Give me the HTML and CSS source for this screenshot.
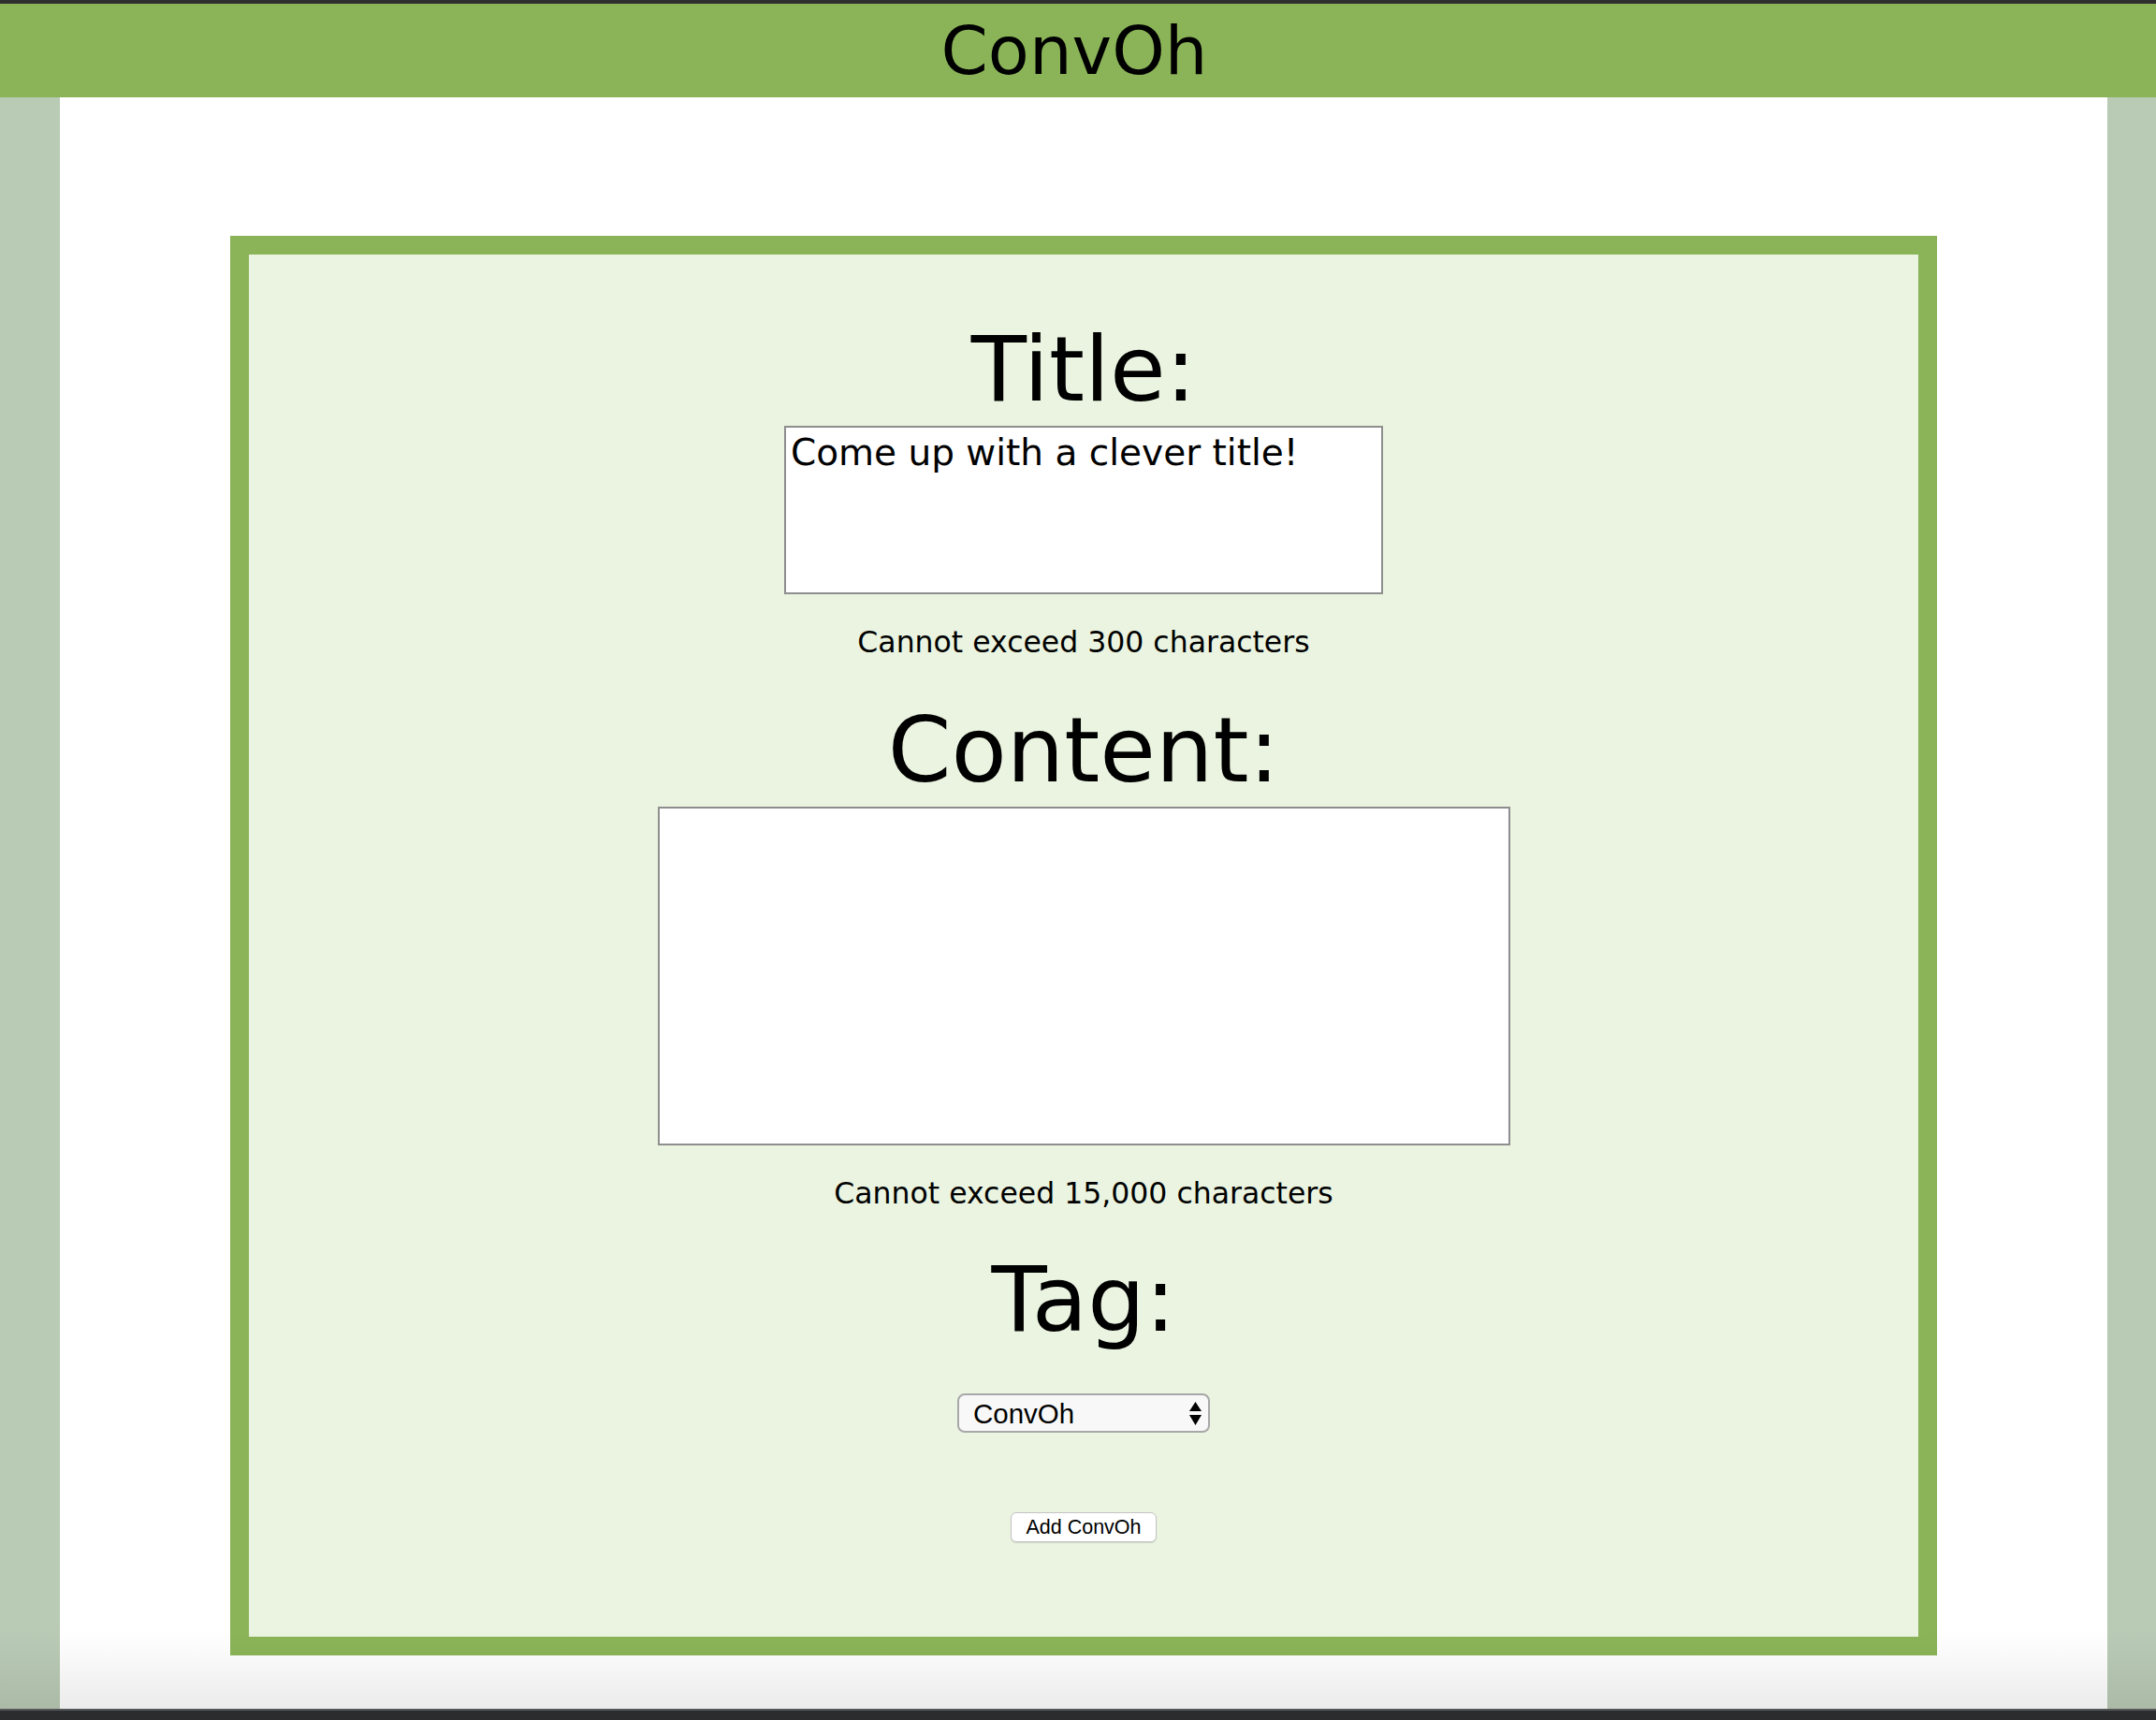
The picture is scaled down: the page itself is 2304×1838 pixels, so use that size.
FILE: index.html
```html
<!DOCTYPE html>
<html lang="en">
<head>
<meta charset="utf-8">
<title>ConvOh</title>
<link rel="stylesheet" href="styles.css">
</head>
<body>
<div class="window">
  <div class="topline"></div>
  <header class="site-header">ConvOh</header>
  <div class="main">
    <div class="side side-left"></div>
    <main class="content">
      <form class="post-form">
        <h2 class="label label-first">Title:</h2>
        <textarea class="field field-title">Come up with a clever title!</textarea>
        <p class="hint">Cannot exceed 300 characters</p>
        <h2 class="label">Content:</h2>
        <textarea class="field field-content"></textarea>
        <p class="hint">Cannot exceed 15,000 characters</p>
        <h2 class="label label-tag">Tag:</h2>
        <div class="select-wrap">
          <select class="tag-select">
            <option>ConvOh</option>
          </select>
          <svg class="select-arrows" width="13" height="25" viewBox="0 0 13 25" aria-hidden="true">
            <path d="M6.5 0 L13 10 L0 10 Z" fill="#000"/>
            <path d="M0 14 L13 14 L6.5 25 Z" fill="#000"/>
          </svg>
        </div>
        <button type="button" class="add-btn">Add ConvOh</button>
      </form>
    </main>
    <div class="side side-right"></div>
    <div class="fade"></div>
  </div>
  <div class="bottomline"></div>
</div>
</body>
</html>
```

FILE: styles.css
```css
html, body {
  margin: 0;
  padding: 0;
}

body {
  background: #2b2c2e;
  font-family: "DejaVu Sans", "Noto Sans", sans-serif;
  color: #000;
}

.window {
  display: flex;
  flex-direction: column;
  width: 2304px;
  height: 1838px;
}

.topline {
  height: 4px;
  background: #2f2f2f;
}

.site-header {
  height: 100px;
  background: #8bb458;
  font-size: 72px;
  line-height: 100px;
  text-align: center;
  padding-right: 8px;
  box-sizing: border-box;
}

.main {
  position: relative;
  flex: 1;
  display: flex;
}

.side {
  background: #b9cab5;
}

.side-left {
  width: 64px;
}

.side-right {
  width: 52px;
}

.content {
  flex: 1;
  background: #ffffff;
}

.fade {
  position: absolute;
  left: 0;
  right: 0;
  bottom: 0;
  height: 86px;
  background: linear-gradient(to bottom, rgba(0, 0, 0, 0) 0%, rgba(0, 0, 0, 0.02) 30%, rgba(0, 0, 0, 0.08) 100%);
  pointer-events: none;
}

.bottomline {
  height: 12px;
  background: #2b2c2e;
  border-top: 2px solid #555658;
  box-sizing: border-box;
}

.post-form {
  box-sizing: border-box;
  width: 1824px;
  margin: 148px 0 0 182px;
  border: 20px solid #8bb458;
  background: #eaf4e0;
  display: flex;
  flex-direction: column;
  align-items: center;
  padding: 74px 0 101px;
}

.label {
  margin: 50px 0 0;
  font-size: 97px;
  line-height: 97px;
  font-weight: normal;
}

.label-first {
  margin-top: 0;
}

.label-tag {
  margin-top: 49px;
}

.field {
  display: block;
  box-sizing: border-box;
  margin: 12px 0 0;
  border: 2px solid #8e8e8e;
  background: #ffffff;
  font-family: "DejaVu Sans", "Noto Sans", sans-serif;
  font-size: 39px;
  line-height: normal;
  color: #000;
  padding: 4px 5px;
  resize: none;
  outline: none;
}

.field-title {
  width: 640px;
  height: 180px;
}

.field-content {
  width: 911px;
  height: 362px;
}

.hint {
  margin: 36px 0 0;
  font-size: 31.5px;
  line-height: 31.5px;
}

.select-wrap {
  position: relative;
  margin-top: 52px;
  width: 270px;
  height: 42px;
}

.tag-select {
  -webkit-appearance: none;
  appearance: none;
  box-sizing: border-box;
  width: 270px;
  height: 42px;
  border: 2px solid #a8a8a8;
  border-radius: 8px;
  background: #f8f8f8;
  font-family: "Liberation Sans", Arial, sans-serif;
  font-size: 29.5px;
  color: #000;
  padding: 0 0 0 15px;
  margin: 0;
  outline: none;
}

.select-arrows {
  position: absolute;
  right: 9px;
  top: 9px;
  pointer-events: none;
}

.add-btn {
  box-sizing: border-box;
  margin-top: 85px;
  width: 156px;
  height: 32px;
  padding: 0;
  border: 1px solid #c4c4c4;
  border-radius: 6px;
  background: #ffffff;
  box-shadow: 0 1px 1px rgba(0, 0, 0, 0.12);
  font-family: "Liberation Sans", Arial, sans-serif;
  font-size: 21.5px;
  color: #000;
}
```
